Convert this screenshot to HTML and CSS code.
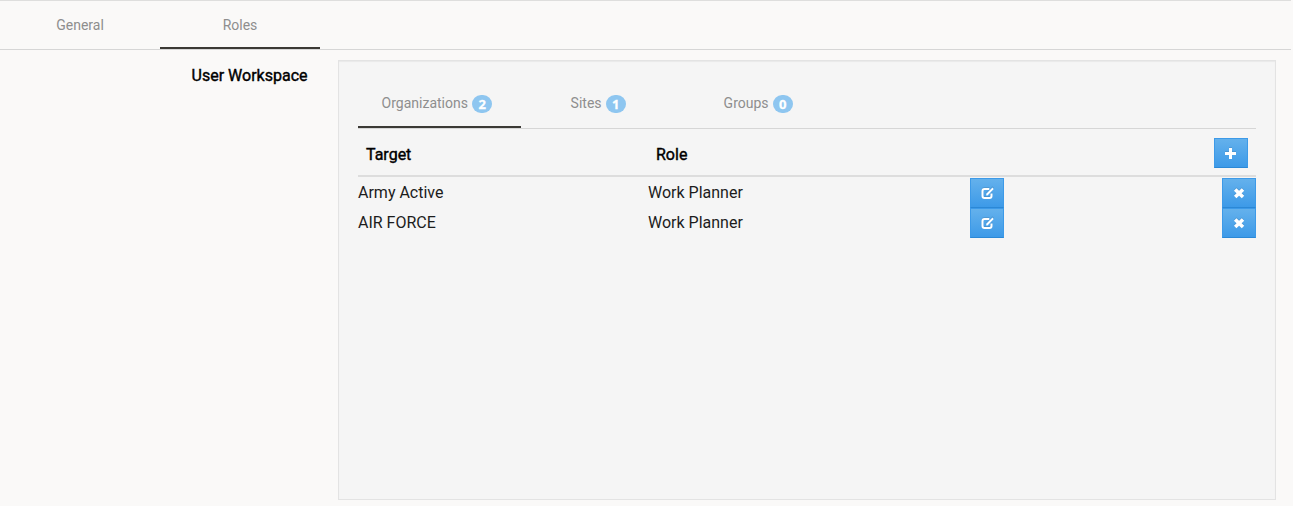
FILE: index.html
```html
<!DOCTYPE html>
<html lang="en">
<head>
<meta charset="utf-8">
<title>User Workspace</title>
<link rel="stylesheet" href="styles.css">
</head>
<body>
<nav class="tabs page-tabs">
  <a class="tab">General</a>
  <a class="tab active">Roles</a>
</nav>
<main class="form-row">
  <label class="form-label">User Workspace</label>
  <section class="well">
    <nav class="tabs">
      <a class="tab active">Organizations<span class="badge">2</span></a>
      <a class="tab">Sites<span class="badge">1</span></a>
      <a class="tab">Groups<span class="badge">0</span></a>
    </nav>
    <div class="row head">
      <div>Target</div>
      <div>Role</div>
      <div></div>
      <div class="end"><button class="btn" aria-label="Add"><svg width="12" height="12" viewBox="0 0 12 12"><path d="M4 1h3v4h4v3h-4v4h-3v-4h-4v-3h4z" fill="#fff"/></svg></button></div>
    </div>
    <div class="row">
      <div>Army Active</div>
      <div>Work Planner</div>
      <div><button class="btn" aria-label="Edit"><svg width="14" height="14" viewBox="0 0 14 14"><path class="pen-box" d="M9.300 3H4.500Q2.500 3 2.500 5V10Q2.500 12 4.500 12H9.500Q11.500 12 11.500 10V7.500"/><path class="pen" d="M6 9.700V7.700L12.300 1.400L14 3L7.600 9.700Z"/></svg></button></div>
      <div class="end"><button class="btn" aria-label="Remove"><svg width="12" height="12" viewBox="0 0 12 12"><path class="cross" d="M2.200 2.400L10 10M10 2.400L2.200 10"/></svg></button></div>
    </div>
    <div class="row">
      <div>AIR FORCE</div>
      <div>Work Planner</div>
      <div><button class="btn" aria-label="Edit"><svg width="14" height="14" viewBox="0 0 14 14"><path class="pen-box" d="M9.300 3H4.500Q2.500 3 2.500 5V10Q2.500 12 4.500 12H9.500Q11.500 12 11.500 10V7.500"/><path class="pen" d="M6 9.700V7.700L12.300 1.400L14 3L7.600 9.700Z"/></svg></button></div>
      <div class="end"><button class="btn" aria-label="Remove"><svg width="12" height="12" viewBox="0 0 12 12"><path class="cross" d="M2.200 2.400L10 10M10 2.400L2.200 10"/></svg></button></div>
    </div>
  </section>
</main>
</body>
</html>
```
FILE: styles.css
```css
* { box-sizing: border-box; }
body {
  margin: 0;
  height: 506px;
  overflow: hidden;
  background: #faf9f8;
  color: #1c1c1c;
  font: 400 16px/20px Roboto, sans-serif;
}
.tabs {
  display: flex;
  height: 49px;
  border-bottom: 1px solid #d6d6d6;
}
.page-tabs {
  width: 1291px;
  height: 50px;
  border-top: 1px solid #dededd;
}
.tab {
  display: flex;
  align-items: center;
  justify-content: center;
  min-width: 160px;
  padding: 0 24.200px 0 23.600px;
  border-bottom: 2px solid transparent;
  color: #8e8e8e;
  font-size: 14px;
  font-weight: 400;
}
.page-tabs .tab { padding: 2px 24px 0; }
.tab.active { border-bottom-color: #3b3935; }
.badge {
  min-width: 20px;
  height: 18px;
  margin: 2px 4px 0;
  padding: 0 6.500px;
  border-radius: 9px;
  background: #8ec6f0;
  color: #fff;
  font: bold 13px/18px "Open Sans", sans-serif;
  -webkit-text-stroke: .3px #fff;
}
.form-row { display: flex; padding: 10px 17px 6px 0; }
.form-label {
  width: 338px;
  padding: 6px 30.500px 0 0;
  color: #000;
  text-align: right;
  -webkit-text-stroke: .4px #000;
}
.well {
  width: 938px;
  height: 440px;
  padding: 19px;
  border: 1px solid #e3e3e3;
  background: #f5f5f5;
  box-shadow: inset 0 1px 1px rgba(0, 0, 0, .05);
}
.row {
  display: grid;
  grid-template-columns: 290px 322px 1fr 50px;
  height: 30px;
  line-height: 29px;
}
.head {
  height: 48px;
  padding: 9px 8px 0;
  margin-bottom: 1px;
  border-bottom: 2px solid #ddd;
  color: #000;
  line-height: 33px;
  -webkit-text-stroke: .4px #000;
}
.end { display: flex; justify-content: flex-end; }
.btn {
  display: flex;
  align-items: center;
  justify-content: center;
  width: 34px;
  height: 30px;
  padding: 0;
  border: 1px solid #3d9ae8;
  border-bottom-color: #2b88d6;
  background: linear-gradient(#64b1ec, #3d9ae8);
}
.btn svg { display: block; filter: drop-shadow(0 -1px 0 rgba(0, 0, 0, .1)); }
.pen-box { fill: none; stroke: #fff; stroke-width: 2; }
.pen { fill: #fff; stroke: #4ca3e9; stroke-width: .5; }
.cross { stroke: #fff; stroke-width: 3.500; }
```
